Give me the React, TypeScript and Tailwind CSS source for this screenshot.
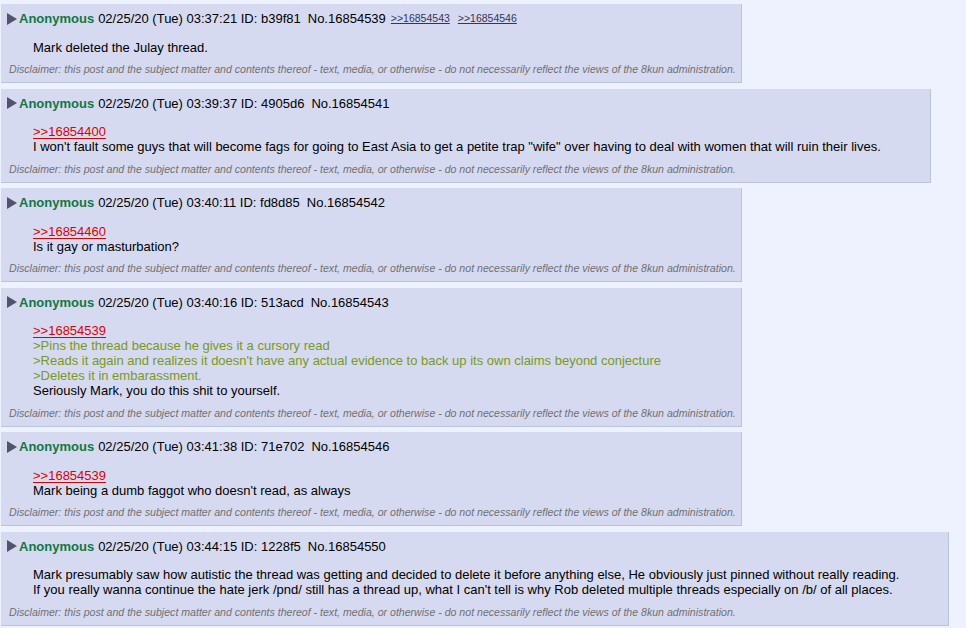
type Line = { kind: 'quote' | 'green' | 'text'; text: string }

type Post = {
  date: string
  id: string
  no: string
  backlinks?: string[]
  lines: Line[]
}

const posts: Post[] = [
  {
    date: '02/25/20 (Tue) 03:37:21',
    id: 'b39f81',
    no: '16854539',
    backlinks: ['16854543', '16854546'],
    lines: [{ kind: 'text', text: 'Mark deleted the Julay thread.' }],
  },
  {
    date: '02/25/20 (Tue) 03:39:37',
    id: '4905d6',
    no: '16854541',
    lines: [
      { kind: 'quote', text: '>>16854400' },
      {
        kind: 'text',
        text: 'I won\'t fault some guys that will become fags for going to East Asia to get a petite trap "wife" over having to deal with women that will ruin their lives.',
      },
    ],
  },
  {
    date: '02/25/20 (Tue) 03:40:11',
    id: 'fd8d85',
    no: '16854542',
    lines: [
      { kind: 'quote', text: '>>16854460' },
      { kind: 'text', text: 'Is it gay or masturbation?' },
    ],
  },
  {
    date: '02/25/20 (Tue) 03:40:16',
    id: '513acd',
    no: '16854543',
    lines: [
      { kind: 'quote', text: '>>16854539' },
      { kind: 'green', text: '>Pins the thread because he gives it a cursory read' },
      {
        kind: 'green',
        text: ">Reads it again and realizes it doesn't have any actual evidence to back up its own claims beyond conjecture",
      },
      { kind: 'green', text: '>Deletes it in embarassment.' },
      { kind: 'text', text: 'Seriously Mark, you do this shit to yourself.' },
    ],
  },
  {
    date: '02/25/20 (Tue) 03:41:38',
    id: '71e702',
    no: '16854546',
    lines: [
      { kind: 'quote', text: '>>16854539' },
      { kind: 'text', text: "Mark being a dumb faggot who doesn't read, as always" },
    ],
  },
  {
    date: '02/25/20 (Tue) 03:44:15',
    id: '1228f5',
    no: '16854550',
    lines: [
      {
        kind: 'text',
        text: 'Mark presumably saw how autistic the thread was getting and decided to delete it before anything else, He obviously just pinned without really reading.',
      },
      {
        kind: 'text',
        text: "If you really wanna continue the hate jerk /pnd/ still has a thread up, what I can't tell is why Rob deleted multiple threads especially on /b/ of all places.",
      },
    ],
  },
]

function Arrow() {
  return (
    <svg width="10" height="12" viewBox="0 0 10 12" className="mr-[2px] shrink-0">
      <polygon points="0,0 10,6 0,12" fill="#53536f" />
    </svg>
  )
}

function PostLine({ line }: { line: Line }) {
  if (line.kind === 'quote') {
    return <div className="text-[#dd0000] underline underline-offset-2">{line.text}</div>
  }
  if (line.kind === 'green') {
    return <div className="text-[#789922]">{line.text}</div>
  }
  return <div className="text-black">{line.text}</div>
}

function Reply({ post }: { post: Post }) {
  return (
    <div>
      <div className="inline-block bg-[#d6daf0] border-r border-b border-[#b7c5d9] pl-[6px] pr-[5px] pt-[7px] pb-[7px]">
        {/* intro */}
        <div className="flex items-center h-[15px] leading-[15px] text-[13px] text-black whitespace-nowrap">
          <Arrow />
          <span className="font-bold text-[#117743]">Anonymous</span>
          <span className="ml-[4px]">{post.date} ID: {post.id}</span>
          <span className="ml-[7px]">No.{post.no}</span>
          {post.backlinks?.map((b, i) => (
            <span
              key={b}
              className={`${i === 0 ? 'ml-[5px]' : 'ml-[8px]'} text-[10.5px] text-[#34345c] underline`}
            >
              &gt;&gt;{b}
            </span>
          ))}
        </div>

        {/* body */}
        <div className="mt-[13.5px] ml-[26px] mr-[44px] text-[13px] leading-[15px] whitespace-nowrap">
          {post.lines.map((l, i) => (
            <PostLine key={i} line={l} />
          ))}
        </div>

        <div className="mt-[8.5px] ml-[2px] text-[10.58px] leading-[12px] italic text-[#707070] whitespace-nowrap">
          Disclaimer: this post and the subject matter and contents thereof - text, media, or otherwise - do not
          necessarily reflect the views of the 8kun administration.
        </div>
      </div>
    </div>
  )
}

export default function App() {
  return (
    <div
      className="min-h-screen bg-[#eef2ff] pt-[4px] pl-px"
      style={{ fontFamily: '"Liberation Sans", Arial, sans-serif' }}
    >
      <div className="flex flex-col gap-[5.5px]">
        {posts.map((p) => (
          <Reply key={p.no} post={p} />
        ))}
      </div>
    </div>
  )
}
